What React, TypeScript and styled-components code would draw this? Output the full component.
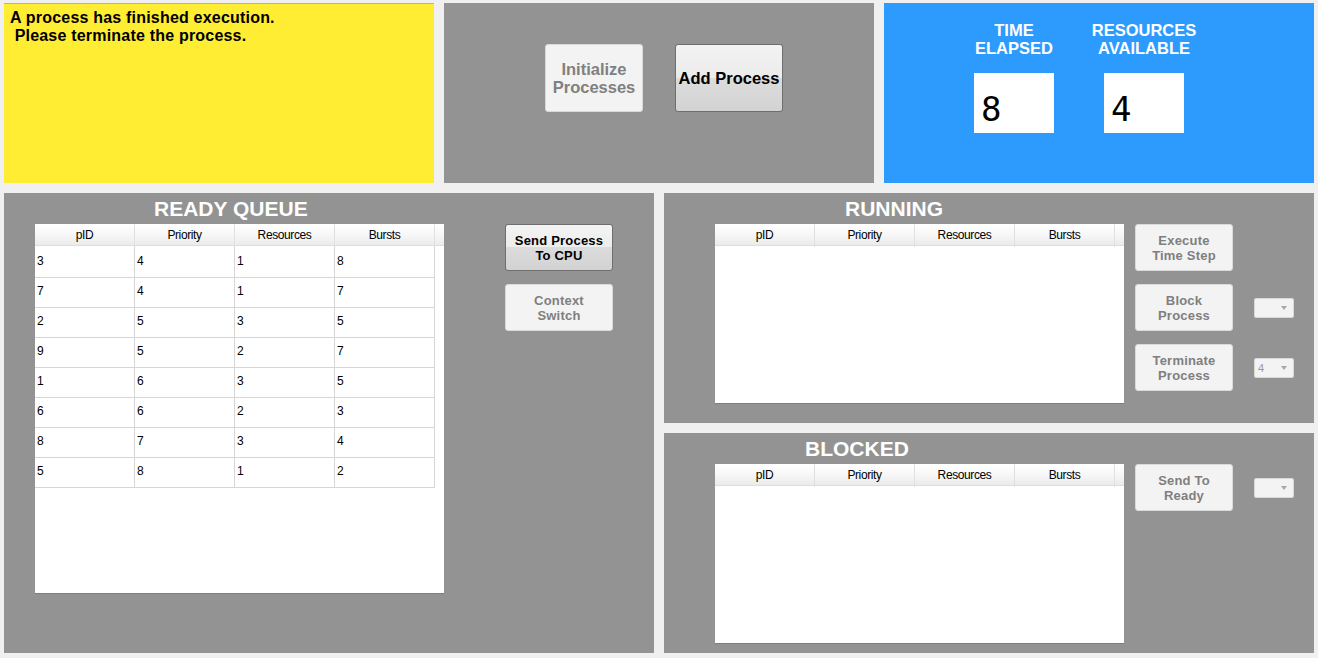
import styled, { createGlobalStyle } from 'styled-components'

const GlobalStyle = createGlobalStyle`
  body {
    margin: 0;
    background: #f0f0f0;
    font-family: 'Liberation Sans', Arial, sans-serif;
  }
`

const Page = styled.div`
  width: 1310px;
  padding: 3px 4px 5px;
  display: flex;
  flex-direction: column;
  gap: 10px;
`

const Row = styled.div`
  display: flex;
  gap: 10px;
`

const Panel = styled.div<{ $bg?: string; $w: number; $h: number }>`
  box-sizing: border-box;
  width: ${p => p.$w}px;
  height: ${p => p.$h}px;
  background: ${p => p.$bg || '#939393'};
`

const MessagePanel = styled(Panel)`
  border-top: 1px solid #b5b0a0;
  padding: 5px 6px;
  font-size: 16px;
  font-weight: bold;
  letter-spacing: 0.2px;
  line-height: 18px;
  color: #000;
  white-space: pre;
`

const ControlPanel = styled(Panel)`
  display: flex;
  align-items: flex-start;
  gap: 32px;
  padding: 41px 0 0 101px;
`

const BigButton = styled.button<{ $w: number; $active?: boolean }>`
  width: ${p => p.$w}px;
  height: 68px;
  font-family: 'Liberation Sans', Arial, sans-serif;
  font-size: 16.5px;
  font-weight: bold;
  line-height: 18px;
  border-radius: 3px;
  padding: 0;
  color: ${p => (p.$active ? '#000' : '#808080')};
  border: 1px solid ${p => (p.$active ? '#6e6e6e' : '#d9d9d9')};
  background: ${p =>
    p.$active ? 'linear-gradient(#f3f3f3, #ebebeb 50%, #dcdcdc 50%, #d3d3d3)' : '#f3f3f3'};
`

const StatsPanel = styled(Panel)`
  display: grid;
  grid-template-columns: 80px 80px;
  column-gap: 50px;
  align-content: start;
  padding: 18px 0 0 90px;
`

const Stat = styled.div`
  display: flex;
  flex-direction: column;
  align-items: center;
`

const StatLabel = styled.div`
  color: #fff;
  font-size: 16.5px;
  font-weight: bold;
  line-height: 18px;
  text-align: center;
  white-space: nowrap;
`

const Readout = styled.div`
  box-sizing: border-box;
  width: 80px;
  height: 60px;
  margin-top: 16px;
  background: #fff;
  padding: 19px 0 0 7px;
  font-family: 'DejaVu Sans Mono', monospace;
  font-size: 34px;
  line-height: 34px;
  color: #000;
`

const QueuePanel = styled(Panel)<{ $pad: number }>`
  display: flex;
  align-items: flex-start;
  padding-left: ${p => p.$pad}px;
`

const TableColumn = styled.div<{ $gap?: number }>`
  display: flex;
  flex-direction: column;
  gap: ${p => p.$gap || 0}px;
`

const Title = styled.div<{ $indent: number }>`
  height: 31px;
  line-height: 32px;
  padding-left: ${p => p.$indent}px;
  color: #fff;
  font-size: 21px;
  font-weight: bold;
  white-space: nowrap;
`

const TableBox = styled.div<{ $h: number }>`
  width: 409px;
  height: ${p => p.$h}px;
  background: #fff;
  box-shadow: 0 1px 0 #7d7d7d;
  overflow: hidden;
`

const Grid = styled.div`
  display: grid;
  grid-template-columns: repeat(4, 100px) 9px;
`

const HeaderRow = styled(Grid)`
  height: 22px;
  background: linear-gradient(#ffffff, #f7f7f7 50%, #ebebeb);
  border-bottom: 1px solid #dedede;
  box-sizing: border-box;
`

const HeaderCell = styled.div`
  border-right: 1px solid #e0e0e0;
  font-size: 12px;
  letter-spacing: -0.4px;
  line-height: 23px;
  text-align: center;
  color: #000;
`

const DataRow = styled(Grid)`
  height: 30px;
`

const Cell = styled.div`
  border-right: 1px solid #d6d6d6;
  border-bottom: 1px solid #d6d6d6;
  padding-left: 2px;
  font-size: 12px;
  line-height: 31px;
  color: #000;
`

const Actions = styled.div<{ $gap: number }>`
  display: flex;
  flex-direction: column;
  gap: 13px;
  margin: 31px 0 0 ${p => p.$gap}px;
`

const ActionRow = styled.div`
  display: flex;
  align-items: center;
  gap: 21px;
`

const SmallButton = styled.button<{ $w: number; $active?: boolean }>`
  width: ${p => p.$w}px;
  height: 47px;
  padding: 0;
  font-family: 'Liberation Sans', Arial, sans-serif;
  font-size: 13px;
  font-weight: bold;
  letter-spacing: 0.2px;
  line-height: 15px;
  border-radius: 3px;
  color: ${p => (p.$active ? '#000' : '#7f7f7f')};
  border: 1px solid ${p => (p.$active ? '#6e6e6e' : '#dadada')};
  background: ${p =>
    p.$active ? 'linear-gradient(#f4f4f4, #ececec 50%, #dcdcdc 50%, #d2d2d2)' : '#f3f3f3'};
`

const Dropdown = styled.div`
  position: relative;
  box-sizing: border-box;
  width: 40px;
  height: 20px;
  border: 1px solid #d8d8d8;
  border-radius: 2px;
  background: #f3f3f3;
  padding-left: 3px;
  font-size: 11px;
  line-height: 18px;
  color: #9a9a9a;
  &::after {
    content: '';
    position: absolute;
    right: 6px;
    top: 7px;
    border-left: 3px solid transparent;
    border-right: 3px solid transparent;
    border-top: 4px solid #a8a8a8;
  }
`

const columns = ['pID', 'Priority', 'Resources', 'Bursts']

const readyQueue = [
  [3, 4, 1, 8],
  [7, 4, 1, 7],
  [2, 5, 3, 5],
  [9, 5, 2, 7],
  [1, 6, 3, 5],
  [6, 6, 2, 3],
  [8, 7, 3, 4],
  [5, 8, 1, 2]
]

const ProcessTable = ({ rows, height }: { rows: number[][]; height: number }) => (
  <TableBox $h={height}>
    <HeaderRow>
      {columns.map(c => (
        <HeaderCell key={c}>{c}</HeaderCell>
      ))}
      <div />
    </HeaderRow>
    {rows.map((r, i) => (
      <DataRow key={i}>
        {r.map((v, j) => (
          <Cell key={j}>{v}</Cell>
        ))}
      </DataRow>
    ))}
  </TableBox>
)

const App = () => {
  return (
    <>
      <GlobalStyle />
      <Page>
        <Row>
          <MessagePanel $bg="#ffed33" $w={430} $h={180}>
            {'A process has finished execution.\n Please terminate the process.'}
          </MessagePanel>
          <ControlPanel $w={430} $h={180}>
            <BigButton $w={98}>
              Initialize
              <br />
              Processes
            </BigButton>
            <BigButton $w={108} $active>
              Add Process
            </BigButton>
          </ControlPanel>
          <StatsPanel $bg="#2d9bfe" $w={430} $h={180}>
            <Stat>
              <StatLabel>
                TIME
                <br />
                ELAPSED
              </StatLabel>
              <Readout>8</Readout>
            </Stat>
            <Stat>
              <StatLabel>
                RESOURCES
                <br />
                AVAILABLE
              </StatLabel>
              <Readout>4</Readout>
            </Stat>
          </StatsPanel>
        </Row>
        <Row>
          <QueuePanel $w={650} $h={460} $pad={31}>
            <TableColumn>
              <Title $indent={119}>READY QUEUE</Title>
              <ProcessTable rows={readyQueue} height={369} />
            </TableColumn>
            <Actions $gap={61}>
              <SmallButton $w={108} $active>
                Send Process
                <br />
                To CPU
              </SmallButton>
              <SmallButton $w={108}>
                Context
                <br />
                Switch
              </SmallButton>
            </Actions>
          </QueuePanel>
          <TableColumn $gap={10}>
            <QueuePanel $w={650} $h={230} $pad={51}>
              <TableColumn>
                <Title $indent={130}>RUNNING</Title>
                <ProcessTable rows={[]} height={179} />
              </TableColumn>
              <Actions $gap={11}>
                <ActionRow>
                  <SmallButton $w={98}>
                    Execute
                    <br />
                    Time Step
                  </SmallButton>
                </ActionRow>
                <ActionRow>
                  <SmallButton $w={98}>
                    Block
                    <br />
                    Process
                  </SmallButton>
                  <Dropdown />
                </ActionRow>
                <ActionRow>
                  <SmallButton $w={98}>
                    Terminate
                    <br />
                    Process
                  </SmallButton>
                  <Dropdown>4</Dropdown>
                </ActionRow>
              </Actions>
            </QueuePanel>
            <QueuePanel $w={650} $h={220} $pad={51}>
              <TableColumn>
                <Title $indent={90}>BLOCKED</Title>
                <ProcessTable rows={[]} height={179} />
              </TableColumn>
              <Actions $gap={11}>
                <ActionRow>
                  <SmallButton $w={98}>
                    Send To
                    <br />
                    Ready
                  </SmallButton>
                  <Dropdown />
                </ActionRow>
              </Actions>
            </QueuePanel>
          </TableColumn>
        </Row>
      </Page>
    </>
  )
}

export default App
